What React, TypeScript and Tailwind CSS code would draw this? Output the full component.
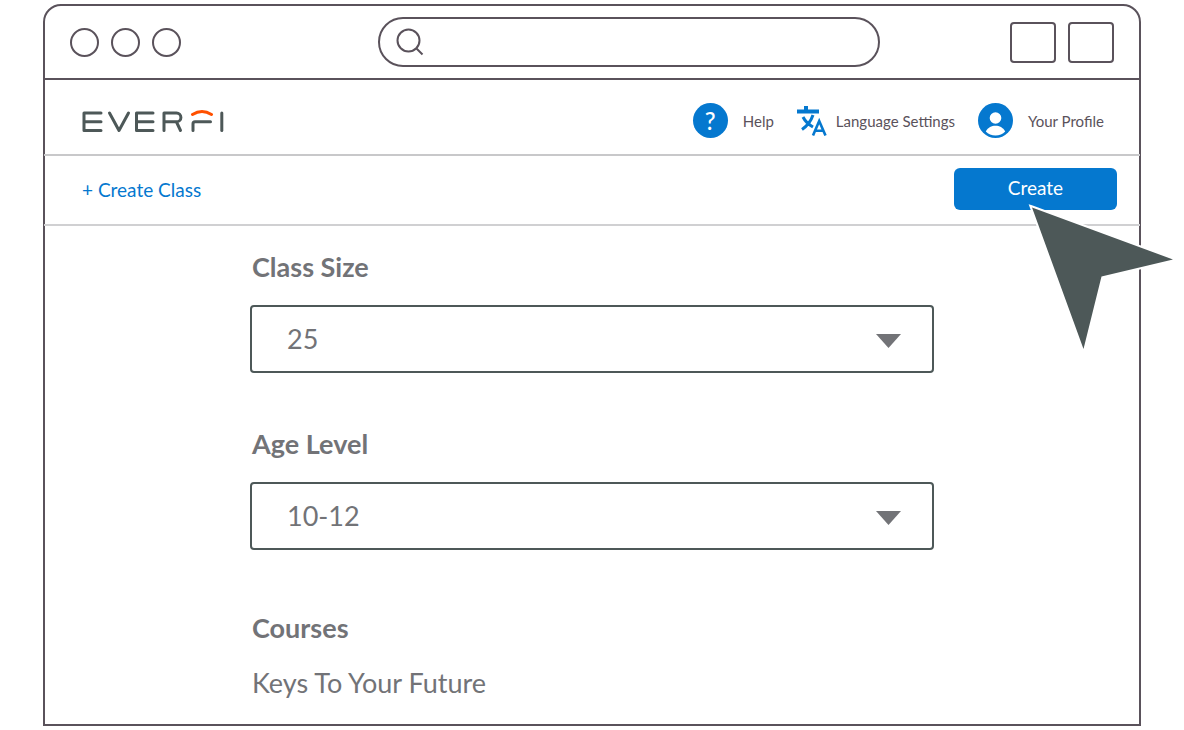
import { useState } from 'react';

interface SelectFieldProps {
  id: string;
  label: string;
  options: string[];
  value: string;
  onChange: (value: string) => void;
}

function Logo() {
  return (
    <svg
      className="h-6 w-[142px]"
      viewBox="82 109 142 24"
      fill="none"
      stroke="#4d5858"
      strokeWidth="3"
      strokeLinecap="round"
      strokeLinejoin="round"
      role="img"
      aria-label="EVERFI"
    >
      <path d="M101 113H84V130.5H101M84 121.8H101" />
      <path d="M109.5 113L119 130.5L128.5 113" />
      <path d="M153 113H136.5V130.5H153M136.5 121.8H153" />
      <path d="M164 130.5V113H176.5A4.4 4.4 0 0 1 176.5 121.8H164M176.5 122L180.5 130.5" />
      <path d="M193 130.5V123.8Q193 121.8 195 121.8H210.5" />
      <path d="M192.5 114.5Q202 108.5 211.5 114.5" stroke="#ff5000" />
      <path d="M221.8 113V130.5" />
    </svg>
  );
}

function TranslateIcon() {
  return (
    <svg className="h-[30px] w-[30px]" viewBox="0 0 30 30" fill="none" stroke="#0578cf" aria-hidden="true">
      <path d="M0 5.5H22M9 0V5.5" strokeWidth="4" />
      <path d="M5 23.5Q13 18 16 9M6 11Q9 17 16 21" strokeWidth="3" />
      <path d="M16 29.5L22.2 15L28.5 29.5M18 24.8H26.5" strokeWidth="2.6" />
    </svg>
  );
}

function ProfileIcon() {
  return (
    <svg className="h-[35px] w-[35px]" viewBox="0 0 35 35" aria-hidden="true">
      <circle cx="17.5" cy="17.5" r="17.5" fill="#0578cf" />
      <circle cx="17.5" cy="15" r="5.8" fill="#fff" />
      <path d="M7.8 28.5C10 24.5 13.5 22.8 17.5 22.8S25 24.5 27.2 28.5C24.8 31.3 21.3 32.6 17.5 32.6S10.2 31.3 7.8 28.5Z" fill="#fff" />
    </svg>
  );
}

function SelectField({ id, label, options, value, onChange }: SelectFieldProps) {
  return (
    <div>
      <label htmlFor={id} className="block pl-0.5 text-[27px] leading-8 font-bold">
        {label}
      </label>
      <div className="relative mt-[22px]">
        <select
          id={id}
          value={value}
          onChange={(e) => onChange(e.target.value)}
          className="block h-[68px] w-full appearance-none rounded-[4px] border-2 border-[#4d5858] bg-white px-[35px] text-[27px] leading-8"
        >
          {options.map((option) => (
            <option key={option}>{option}</option>
          ))}
        </select>
        <svg
          className="pointer-events-none absolute top-[29px] right-[33px] h-[14px] w-[25px]"
          viewBox="0 0 25 14"
          fill="#727377"
          aria-hidden="true"
        >
          <path d="M0 0H25L12.5 14Z" />
        </svg>
      </div>
    </div>
  );
}

export default function App() {
  const [classSize, setClassSize] = useState('25');
  const [ageLevel, setAgeLevel] = useState('10-12');

  return (
    <div className="px-[43px] py-1 font-['Lato',sans-serif] text-[#727377]">
      <div className="rounded-t-[18px] border-2 border-[#5a525b] bg-white">
        {/* Browser bar */}
        <div className="flex h-[74px] items-center border-b-2 border-[#5a525b] px-[25px]">
          <div className="flex gap-3">
            <span className="h-[29px] w-[29px] rounded-full border-2 border-[#5a525b]" />
            <span className="h-[29px] w-[29px] rounded-full border-2 border-[#5a525b]" />
            <span className="h-[29px] w-[29px] rounded-full border-2 border-[#5a525b]" />
          </div>
          <div className="mr-[130px] ml-[197px] flex h-[50px] min-w-0 flex-1 items-center rounded-full border-2 border-[#5a525b] pr-6 pl-4">
            <svg className="h-7 w-7 shrink-0" viewBox="0 0 28 28" fill="none" stroke="#5a525b" strokeWidth="2" aria-hidden="true">
              <circle cx="12.5" cy="12.5" r="11" />
              <path d="M20.5 20.5L26.5 26.5" />
            </svg>
            <input type="text" aria-label="Search" className="ml-3 min-w-0 flex-1 outline-none" />
          </div>
          <div className="flex gap-3">
            <span className="h-[41px] w-[46px] rounded-[4px] border-2 border-[#5a525b]" />
            <span className="h-[41px] w-[46px] rounded-[4px] border-2 border-[#5a525b]" />
          </div>
        </div>

        {/* Site header */}
        <header className="-mx-px flex h-[76px] items-center border-b-2 border-[#c8c8ca] pt-[7px] pr-9 pl-[38px]">
          <Logo />
          <nav className="ml-auto flex items-center gap-[23px] text-[15px] leading-5 text-[#5a525b]">
            <a href="#help" className="flex items-center gap-[15px]">
              <span className="flex h-[35px] w-[35px] items-center justify-center rounded-full bg-[#0578cf] text-2xl font-medium text-white">
                ?
              </span>
              Help
            </a>
            <a href="#language" className="flex items-center gap-[9px]">
              <TranslateIcon />
              Language Settings
            </a>
            <a href="#profile" className="flex items-center gap-[15px]">
              <ProfileIcon />
              Your Profile
            </a>
          </nav>
        </header>

        {/* Actions */}
        <div className="-mx-px flex h-[70px] items-start justify-between border-b-2 border-[#d0d0d2] pt-3 pr-[23px] pl-[38px]">
          <a href="#create-class" className="text-[19px] leading-[44px] text-[#0578cf]">
            + Create Class
          </a>
          <div className="relative">
            <button type="button" className="block h-[42px] w-[163px] rounded-[6px] bg-[#0578cf] pb-0.5 text-[19px] leading-6 text-white">
              Create
            </button>
            <svg
              className="pointer-events-none absolute top-8 left-[70px] h-[156px] w-[156px]"
              viewBox="0 0 156 156"
              aria-hidden="true"
            >
              <path
                d="M8 7.5L149 59.5L77.5 76.5L59.5 149Z"
                fill="#4d5858"
                stroke="#fff"
                strokeWidth="4"
                strokeMiterlimit="10"
                paintOrder="stroke"
              />
            </svg>
          </div>
        </div>

        {/* Class form */}
        <main className="mx-auto max-w-[684px] pt-[25px] pb-[25px]">
          <form className="flex flex-col gap-[55px]">
            <SelectField
              id="class-size"
              label="Class Size"
              options={['15', '20', '25', '30']}
              value={classSize}
              onChange={setClassSize}
            />
            <SelectField
              id="age-level"
              label="Age Level"
              options={['7-9', '10-12', '13-15']}
              value={ageLevel}
              onChange={setAgeLevel}
            />
          </form>
          <section className="mt-[62px] pl-0.5">
            <h2 className="text-[27px] leading-8 font-bold">Courses</h2>
            <p className="mt-[23px] text-[27px] leading-8">Keys To Your Future</p>
          </section>
        </main>
      </div>
    </div>
  );
}
